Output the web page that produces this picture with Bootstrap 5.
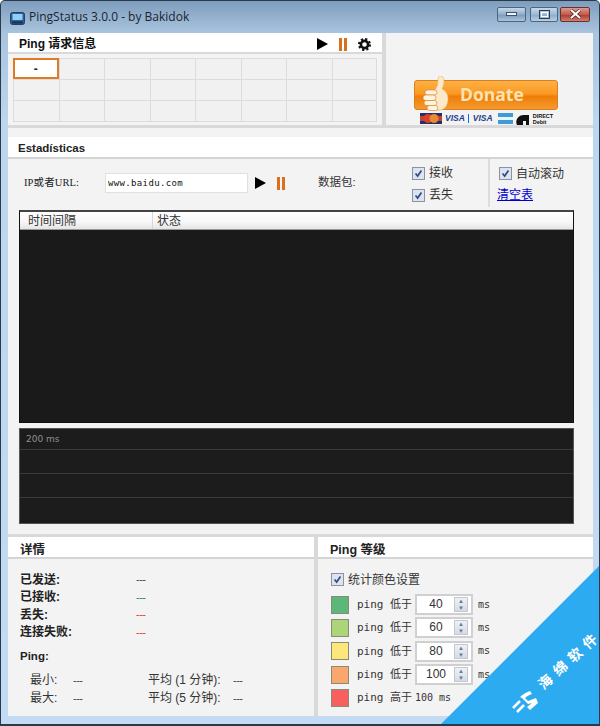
<!DOCTYPE html>
<html lang="zh">
<head>
<meta charset="utf-8">
<title>PingStatus</title>
<link href="https://cdn.jsdelivr.net/npm/bootstrap@5.3.0/dist/css/bootstrap.min.css" rel="stylesheet">
<style>
html,body{margin:0;padding:0;background:#fff}
body{font-family:"Liberation Sans","Noto Sans CJK SC",sans-serif;font-size:12px;line-height:1;color:#222}
.win{width:600px;height:726px;overflow:hidden;position:relative;background:linear-gradient(180deg,#7e9dbd 0,#a9c4de 32px,#bcd6f0 120px,#c3dbf3 100%);border:1px solid #2a3a4a;border-bottom-width:2px;border-radius:5px 5px 0 0}
.tbar{height:32px;padding:0 9px 0 9px}
.ticon{width:15px;height:13px;margin-right:4px;margin-top:2px}
.ttext{font-family:"Open Sans",sans-serif;font-size:12px;color:#1c2430;margin-top:0}
.wbtn{width:29px;height:15px;border:1px solid #50657c;border-radius:2px;background:linear-gradient(180deg,#c6d8ea,#8eaccb 50%,#7d9dbd 55%,#a8c5df);margin-top:-6px}
.wbtn2{width:28px;background:linear-gradient(180deg,#c6d8ea,#9db9d5 50%,#8fadcb 55%,#b6d0e7)}
.wclose{width:30px;margin-left:2px;border-color:#6a3030;background:linear-gradient(180deg,#dd9a90,#c25a4c 50%,#b03c30 55%,#cf7f70)}
.client{margin:0 6px 0 7px;width:585px;height:683px;background:#d9d9d9}
.ptop{height:92px;gap:4px}
.plane{background:#f3f3f3}
.p1{width:374px}
.p2{width:207px}
.head{background:#fff;height:21px;font-weight:700;font-size:12px;color:#111;border-bottom:2px solid #d9d9d9;padding-left:11px;padding-top:3px}
.pgrid{display:grid;grid-template-columns:repeat(8,45.5px);grid-auto-rows:21px;margin:4px 0 0 5px;width:364px;border-right:1px solid #dcdcdc;border-bottom:1px solid #dcdcdc;background:#f1f1f1}
.pcell{border-left:1px solid #dcdcdc;border-top:1px solid #dcdcdc}
.pcell-on{background:#fff;border:2px solid #e07b25;font-weight:700;font-size:12px}
.tri{width:0;height:0;border-left:11px solid #000;border-top:6.5px solid transparent;border-bottom:6.5px solid transparent}
.paus{width:8px;height:13px;border-left:3px solid #d9701c;border-right:3px solid #d9701c}
.tools{margin-left:auto;margin-right:11px;gap:11px}
.donate{width:144px;height:30px;border-radius:3px;border:1px solid #d9801d;background:linear-gradient(180deg,#fdb045 0,#fb9a25 45%,#ef7e08 55%,#f49a2e 100%);color:#fde3b0;font-family:"Open Sans",sans-serif;font-weight:700;font-size:17.5px;padding-left:45px;position:relative;margin-left:28px}
.thumb{position:absolute;left:8px;top:-5px;width:27px;height:36px}
.cards{margin-left:34px;margin-top:2px;height:13px;gap:3px}
.visa{font-family:"Liberation Sans",sans-serif;font-style:italic;font-weight:700;font-size:8.5px;color:#22408f}
.amex{margin-left:2px}
.ddeb{font-family:"Liberation Sans",sans-serif;font-weight:700;font-size:5.5px;line-height:6px;color:#111;margin-left:-2px}
.line3{height:3px;background:#d9d9d9}
.stats{height:406px}
.stop{height:9px}
.head2{height:22px;background:#fff;border-bottom:2px solid #d4d4d4;font-weight:700;font-size:11.5px;padding-left:10px;padding-top:3px;color:#222}
.headcjk{font-size:12.5px;padding-left:12px;padding-top:6px}
.srow{height:48px;position:relative}
.serif{font-family:"Liberation Serif","Noto Sans CJK SC",serif}
.mono{font-family:"DejaVu Sans Mono","Noto Sans CJK SC",monospace}
.lbl{font-size:10.5px;color:#222;letter-spacing:.1px;padding-left:16px;width:97px}
.ipbox{width:143px;height:20px;border:1px solid #e0e0e0;background:#fff;font-size:9px;padding-left:2px;letter-spacing:.35px;color:#111;margin-right:7px}
.ctrl{gap:11px;width:63px}
.lbl2{font-size:11.5px;width:94px;color:#333}
.cks{gap:9px;width:76px;padding-top:2px}
.form-check-input.ckx{width:13px;height:13px;margin:0 4px 0 0;border:1px solid #8d939d;border-radius:0;background-color:#dce4f2;background-image:url("data:image/svg+xml,%3Csvg xmlns='http://www.w3.org/2000/svg' viewBox='0 0 13 13'%3E%3Cpath d='M3 6.5l2.5 3L10 3' fill='none' stroke='%23354a80' stroke-width='2'/%3E%3C/svg%3E");background-size:100% 100%;flex:none;opacity:1}
.ctxt{font-size:12px;color:#333}
.sdiv{border-left:2px solid #dcdcdc;height:48px;padding:8px 0 0 9px}
.clr{color:#0000cc;font-size:12px;margin-left:-2px;margin-top:9px;display:block}
.ltable{margin:3px 19px 0 11px;height:213px;border:1px solid #111;background:#1a1a1a;border-top:2px solid #444}
.lhead{height:18px;background:linear-gradient(180deg,#fff 0,#f6f6f6 60%,#e4e4e4 100%);border-bottom:1px solid #999;font-size:12px;color:#333}
.lh1{width:133px;padding-left:8px;padding-top:1px;border-right:1px solid #d8d8d8;height:100%}
.lh2{padding-left:4px;padding-top:1px}
.graph{margin:5px 19px 0 11px;height:96px;background:#1c1c1c;border:1px solid #555;display:grid;grid-template-rows:21px 24px 24px 1fr}
.gband{border-bottom:1px solid #3a3a3a}
.gband:last-child{border-bottom:0}
.glabel{font-family:"DejaVu Sans",sans-serif;font-size:9px;color:#8f8f8f;padding:6px 0 0 6px}
.pbot{height:179px;gap:4px}
.d1{width:306px}
.d2{width:275px}
.kv{padding:12px 0 0 12px}
.kvrow{height:17.5px;font-weight:700;font-size:12px;color:#222}
.kkey{width:116px}
.vv{font-weight:400;font-size:11px;letter-spacing:-.5px;color:#444}
.pingt{font-weight:700;font-size:11.5px;margin-top:10px;margin-bottom:8px;height:12px}
.srowb{height:18px;padding-left:10px;font-size:12px;color:#333}
.a1{width:43px}.a2{width:75px}.a3{width:85px}
.lv{padding:14px 0 0 13px}
.lvcheck{margin-bottom:7px}
.swa{width:18px;height:18px;border:1px solid #8a8a7a;margin-right:8px;flex:none}
.lvrow{height:23.3px}
.lvt{width:58px;font-size:11px;color:#333;flex:none}
.spin{width:58px;height:21px;border:2px solid #d0d0d0;background:#fff;font-size:12px;position:relative;padding-right:16px;text-align:center;line-height:17px;color:#333;margin-right:5px}
.arrows{position:absolute;right:3px;top:1px;width:14px;height:15px;background:linear-gradient(180deg,#eef1f6,#d5dbe6);border:1px solid #c2c8d2;color:#6a7a90;font-size:6px;line-height:7px;text-align:center}
.msx{font-size:10px;color:#333}
.sponge{position:absolute;right:0;bottom:0;width:158px;height:158px;background:#2cabf0;clip-path:polygon(100% 0,100% 100%,0 100%)}
.sptext{position:absolute;right:-5px;bottom:56px;width:74px;height:14px;transform:rotate(-42deg);color:#fff;font-weight:700;font-size:14px;letter-spacing:6px;line-height:14px;white-space:nowrap;font-family:"Noto Sans CJK SC",sans-serif}
.splast{letter-spacing:0}
.splogo{position:absolute;right:60px;bottom:10px;width:28px;height:26px}
</style>
</head>
<body>
<div class="win">
  <div class="tbar d-flex align-items-center">
    <svg class="ticon" viewBox="0 0 15 13"><rect x=".5" y=".5" width="14" height="12" rx="2" fill="#2d5f9a" stroke="#24405f"/><rect x="2.5" y="2" width="10" height="6" fill="#8fd0f5"/><rect x="2" y="9.5" width="11" height="2" fill="#17314f"/></svg>
    <span class="ttext">PingStatus 3.0.0 - by Bakidok</span>
    <div class="ms-auto d-flex align-items-center gap-0">
      <div class="wbtn d-flex align-items-center justify-content-center me-1"><svg width="11" height="5"><rect x=".5" y=".5" width="10" height="3" fill="#eef4fa" stroke="#3e5268"/></svg></div>
      <div class="wbtn wbtn2 d-flex align-items-center justify-content-center"><svg width="11" height="9"><rect x=".5" y=".5" width="10" height="8" fill="none" stroke="#2e3e50"/><rect x="2.5" y="2.5" width="6" height="4" fill="none" stroke="#fff"/></svg></div>
      <div class="wbtn wclose d-flex align-items-center justify-content-center"><svg width="13" height="10"><path d="M2 1l9 8M11 1l-9 8" stroke="#4a2622" stroke-width="3.4"/><path d="M2 1l9 8M11 1l-9 8" stroke="#fff" stroke-width="2"/></svg></div>
    </div>
  </div>
  <div class="client">
    <div class="ptop d-flex">
      <div class="p1 plane">
        <div class="head d-flex align-items-center">
          <span>Ping 请求信息</span>
          <div class="tools d-flex align-items-center">
            <span class="tri"></span><span class="paus"></span>
            <svg width="13" height="13" viewBox="0 0 13 13"><circle cx="6.5" cy="6.5" r="3.6" fill="none" stroke="#111" stroke-width="2.6"/><circle cx="6.5" cy="6.5" r="5.5" fill="none" stroke="#111" stroke-width="2" stroke-dasharray="2.2 2.12"/></svg>
          </div>
        </div>
        <div class="pgrid">
          <div class="pcell pcell-on d-flex align-items-center justify-content-center">-</div>
          <div class="pcell"></div><div class="pcell"></div><div class="pcell"></div><div class="pcell"></div><div class="pcell"></div><div class="pcell"></div><div class="pcell"></div>
          <div class="pcell"></div><div class="pcell"></div><div class="pcell"></div><div class="pcell"></div><div class="pcell"></div><div class="pcell"></div><div class="pcell"></div><div class="pcell"></div>
          <div class="pcell"></div><div class="pcell"></div><div class="pcell"></div><div class="pcell"></div><div class="pcell"></div><div class="pcell"></div><div class="pcell"></div><div class="pcell"></div>
        </div>
      </div>
      <div class="p2 plane d-flex flex-column justify-content-end">
        <div class="donate d-flex align-items-center">
          <svg class="thumb" viewBox="0 0 27 36"><path d="M11 15c3-3 4-7 4-11 0-3 1-4 3-4s3 2 3 5-1 6-2 8c4 2 6 5 6 10 0 6-3 10-7 11-4 1-7 0-8-2z" fill="#fbe9cc" stroke="#f0b060" stroke-width=".6"/><rect x="2" y="14" width="12" height="5" rx="2.5" fill="#fff3df" stroke="#d98a30" stroke-width=".7"/><rect x="0" y="19" width="13" height="5.5" rx="2.7" fill="#fff3df" stroke="#d98a30" stroke-width=".7"/><rect x="1" y="24.500" width="13" height="5" rx="2.5" fill="#fff3df" stroke="#d98a30" stroke-width=".7"/><rect x="4" y="29.500" width="11" height="5" rx="2.500" fill="#fff3df" stroke="#d98a30" stroke-width=".7"/></svg>
          <span>Donate</span>
        </div>
        <div class="cards d-flex align-items-center">
          <svg width="22" height="11"><rect width="22" height="11" fill="#20306a"/><rect y="3" width="22" height="5" fill="#c8402c"/><circle cx="8" cy="5.500" r="4.500" fill="#d8402a"/><circle cx="14" cy="5.500" r="4.500" fill="#e88a30"/></svg>
          <span class="visa">VISA</span><span class="visa border-start border-primary ps-1">VISA</span>
          <svg width="15" height="11" class="amex"><rect width="15" height="11" fill="#3f9bd6"/><rect y="4" width="15" height="3" fill="#e8f3fa"/></svg>
          <svg width="16" height="12"><path d="M1 12a7 7 0 0 1 7-10h5v10h-3v-4h-3v4z" fill="#111"/></svg>
          <span class="ddeb">DIRECT<br>Debit</span>
        </div>
      </div>
    </div>
    <div class="line3"></div>
    <div class="stats plane">
      <div class="stop"></div>
      <div class="head2 d-flex align-items-center">Estadísticas</div>
      <div class="srow d-flex align-items-center">
        <span class="lbl serif">IP或者URL:</span>
        <div class="ipbox mono d-flex align-items-center">www.baidu.com</div>
        <div class="ctrl d-flex align-items-center"><span class="tri"></span><span class="paus"></span></div>
        <span class="lbl2">数据包:</span>
        <div class="cks d-flex flex-column">
          <div class="d-flex align-items-center"><input class="form-check-input ckx" type="checkbox" checked><span class="ctxt">接收</span></div>
          <div class="d-flex align-items-center"><input class="form-check-input ckx" type="checkbox" checked><span class="ctxt">丢失</span></div>
        </div>
        <div class="sdiv">
          <div class="d-flex align-items-center"><input class="form-check-input ckx" type="checkbox" checked><span class="ctxt">自动滚动</span></div>
          <a class="clr" href="#">清空表</a>
        </div>
      </div>
      <div class="ltable">
        <div class="lhead d-flex align-items-center">
          <div class="lh1 d-flex align-items-center">时间间隔</div>
          <div class="lh2">状态</div>
        </div>
      </div>
      <div class="graph">
        <div class="gband glabel">200 ms</div><div class="gband"></div><div class="gband"></div><div class="gband"></div>
      </div>
    </div>
    <div class="line3"></div>
    <div class="pbot d-flex">
      <div class="d1 plane">
        <div class="head2 headcjk d-flex align-items-center">详情</div>
        <div class="kv">
          <div class="kvrow d-flex align-items-center"><span class="kkey">已发送:</span><span class="vv">---</span></div>
          <div class="kvrow d-flex align-items-center"><span class="kkey">已接收:</span><span class="vv text-success">---</span></div>
          <div class="kvrow d-flex align-items-center"><span class="kkey">丢失:</span><span class="vv text-danger">---</span></div>
          <div class="kvrow d-flex align-items-center"><span class="kkey">连接失败:</span><span class="vv text-danger">---</span></div>
          <div class="pingt">Ping:</div>
          <div class="srowb d-flex align-items-center"><span class="a1">最小:</span><span class="a2 vv">---</span><span class="a3">平均 (1 分钟):</span><span class="vv">---</span></div>
          <div class="srowb d-flex align-items-center"><span class="a1">最大:</span><span class="a2 vv">---</span><span class="a3">平均 (5 分钟):</span><span class="vv">---</span></div>
        </div>
      </div>
      <div class="d2 plane">
        <div class="head2 headcjk d-flex align-items-center">Ping 等级</div>
        <div class="lv">
          <div class="lvcheck d-flex align-items-center"><input class="form-check-input ckx" type="checkbox" checked><span class="ctxt">统计颜色设置</span></div>
          <div class="lvrow d-flex align-items-center"><span class="swa" style="background:#5cb878"></span><span class="lvt mono">ping 低于</span><div class="spin">40<div class="arrows">▲<br>▼</div></div><span class="msx mono">ms</span></div>
          <div class="lvrow d-flex align-items-center"><span class="swa" style="background:#aed47a"></span><span class="lvt mono">ping 低于</span><div class="spin">60<div class="arrows">▲<br>▼</div></div><span class="msx mono">ms</span></div>
          <div class="lvrow d-flex align-items-center"><span class="swa" style="background:#fde67a"></span><span class="lvt mono">ping 低于</span><div class="spin">80<div class="arrows">▲<br>▼</div></div><span class="msx mono">ms</span></div>
          <div class="lvrow d-flex align-items-center"><span class="swa" style="background:#fba66a"></span><span class="lvt mono">ping 低于</span><div class="spin">100<div class="arrows">▲<br>▼</div></div><span class="msx mono">ms</span></div>
          <div class="lvrow d-flex align-items-center"><span class="swa" style="background:#f86060"></span><span class="lvt mono">ping 高于</span><span class="msx mono">100 ms</span></div>
        </div>
      </div>
    </div>
  </div>
  <div class="sponge"></div>
  <div class="sptext">海绵软<span class="splast">件</span></div>
  <svg class="splogo" viewBox="0 0 28 26"><path d="M2 20l7-7M6 24l7-7" stroke="#fff" stroke-width="2.500" fill="none"/><path d="M9 9c3-3 7-5 10-6l2 3c-3 1-5 2-7 4l3 3 8-3 2 5-8 7-3-3 5-4-4 1-6-6z" fill="#fff"/></svg>
</div>
</body>
</html>
